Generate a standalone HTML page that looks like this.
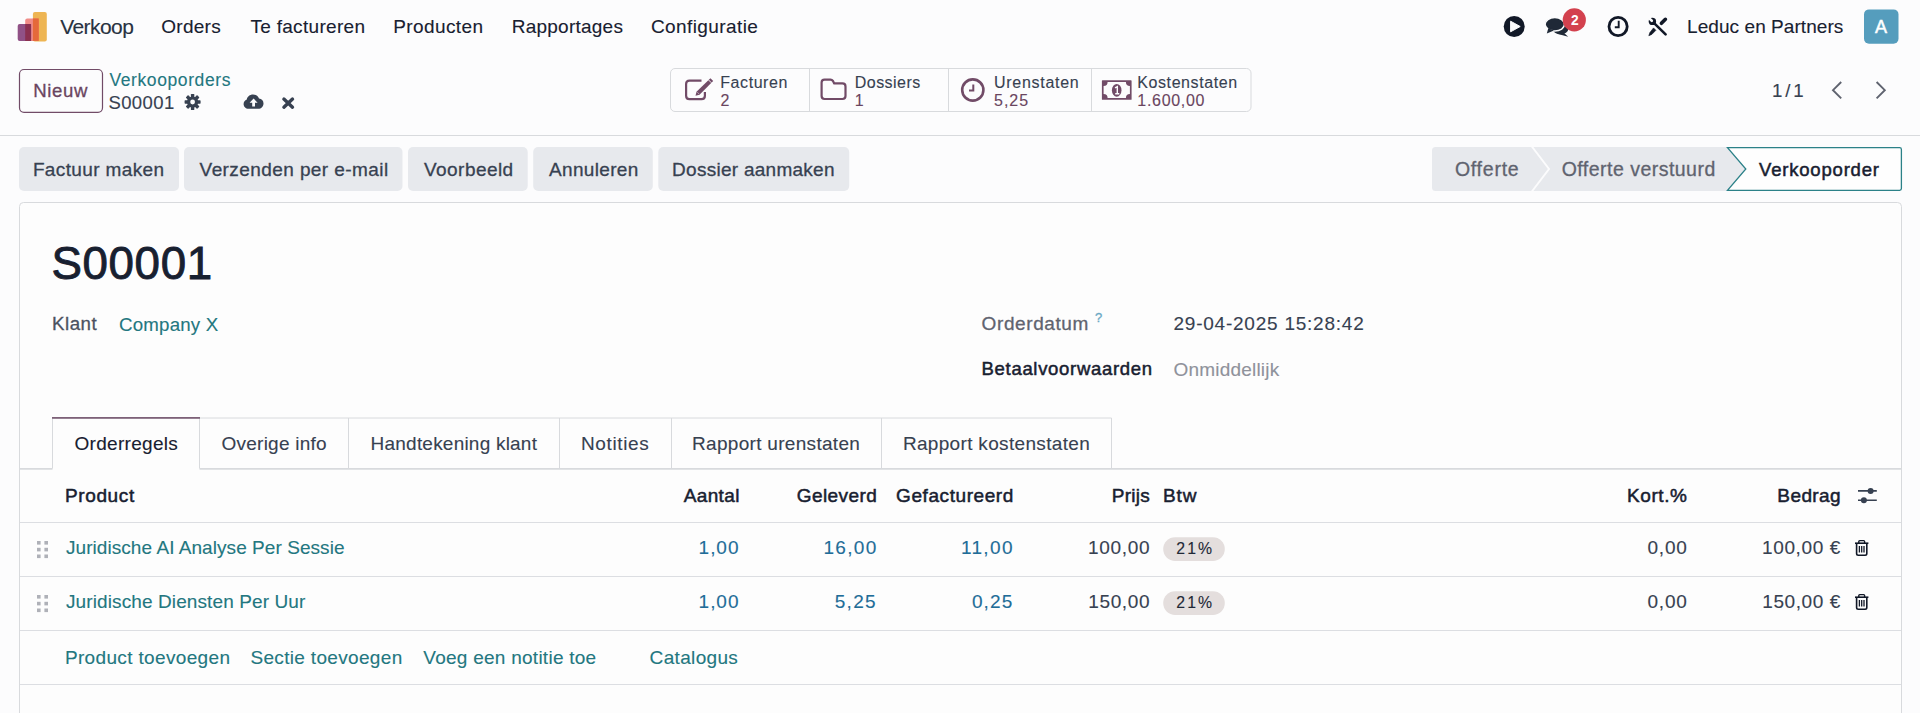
<!DOCTYPE html>
<html><head><meta charset="utf-8"><title>S00001</title>
<style>
html,body{margin:0;padding:0;}
body{width:1920px;height:713px;overflow:hidden;position:relative;background:#fcfcfd;font-family:"Liberation Sans",sans-serif;}
.t{position:absolute;white-space:pre;}
svg.ov{position:absolute;left:0;top:0;}
</style></head><body>
<svg class="ov" width="1920" height="713" viewBox="0 0 1920 713">
<!-- logo -->
<rect x="32.9" y="12" width="13.9" height="29.4" rx="2" fill="#eeb553"/>
<rect x="25.2" y="18.4" width="13.6" height="22.5" rx="2" fill="#f08c88"/>
<rect x="32.9" y="18.4" width="5.9" height="22.5" fill="#e5693a"/>
<rect x="17.7" y="24" width="13.4" height="17.1" rx="2" fill="#905186"/>
<rect x="25.2" y="24" width="5.9" height="17" fill="#8b3050"/>
<!-- navbar icons -->
<circle cx="1514.2" cy="26.5" r="10.5" fill="#111827"/>
<path d="M1510.6 21.2 L1520.2 26.5 L1510.6 31.8 Z" fill="#fcfcfd" stroke="#fcfcfd" stroke-width="1" stroke-linejoin="round"/>
<!-- comments -->
<g fill="#1f2937">
<ellipse cx="1560.5" cy="29" rx="7.8" ry="5.3"/>
<path d="M1563 32 L1568.2 36.8 L1558 34 Z"/>
</g>
<g fill="#1f2937" stroke="#fcfcfd" stroke-width="1.5">
<ellipse cx="1554.8" cy="24.3" rx="9.7" ry="6.7"/>
</g>
<path d="M1548.3 28.2 L1546.8 33.6 L1554 30.4 Z" fill="#1f2937"/>
<circle cx="1574.3" cy="19.9" r="11.6" fill="#d3414e"/>
<!-- clock nav -->
<circle cx="1618.1" cy="26.5" r="9.1" fill="none" stroke="#111827" stroke-width="2.8"/>
<path d="M1618.7 20.8 V27.2 H1614.8" fill="none" stroke="#111827" stroke-width="1.9"/>
<!-- tools -->
<g fill="none" stroke="#111827" stroke-linecap="round">
<path d="M1654.6 23.6 L1665.6 34.4" stroke-width="2.6"/>
<path d="M1665.4 19.3 L1661.4 23.3" stroke-width="3.6"/>
</g>
<circle cx="1652.4" cy="21.4" r="3.7" fill="#111827"/>
<path d="M1648.5 17.6 L1651.8 20.8" stroke="#fcfcfd" stroke-width="2.6" stroke-linecap="round"/>
<path d="M1655.9 30.3 L1653.5 27.9 L1649.9 32.6 L1648.8 35.7 L1651.8 34.4 Z" fill="#111827" stroke="#111827" stroke-width="0.6" stroke-linejoin="round"/>
<!-- avatar -->
<rect x="1864" y="9.4" width="34.5" height="34.4" rx="5" fill="#559dbd"/>
<!-- control panel -->
<rect x="19.5" y="69.5" width="83" height="42.8" rx="4.5" fill="none" stroke="#714b67" stroke-width="1.2"/>
<!-- gear -->
<g transform="translate(192.6 102)">
<g fill="#374151">
<circle r="5.6"/>
<rect x="-1.7" y="-8" width="3.4" height="16" rx="0.6"/>
<rect x="-1.7" y="-8" width="3.4" height="16" rx="0.6" transform="rotate(45)"/>
<rect x="-1.7" y="-8" width="3.4" height="16" rx="0.6" transform="rotate(90)"/>
<rect x="-1.7" y="-8" width="3.4" height="16" rx="0.6" transform="rotate(135)"/>
</g>
<circle r="2.4" fill="#fcfcfd"/>
</g>
<!-- cloud upload -->
<path d="M1 0" fill="none"/>
<g transform="translate(243.6 94.4)">
<path d="M5 14.4 C2 14.4 0 12.2 0 9.6 C0 7.5 1.3 5.8 3.2 5.2 C3.6 2.2 6.2 0 9.4 0 C12.2 0 14.5 1.7 15.4 4.1 C18 4.3 19.9 6.4 19.9 9.1 C19.9 12 17.6 14.4 14.7 14.4 Z" fill="#374151"/>
<path d="M10 4.2 L14 8.4 H11.4 V12 H8.6 V8.4 H6 Z" fill="#fcfcfd"/>
</g>
<!-- times -->
<path d="M283.9 99.1 L292.5 107.2 M292.5 99.1 L283.9 107.2" stroke="#374151" stroke-width="3.4" stroke-linecap="round"/>
<!-- stat box -->
<rect x="670.5" y="68.5" width="580.5" height="43" rx="4.5" fill="none" stroke="#d8dadd" stroke-width="1"/>
<path d="M809.5 69 V111 M948.5 69 V111 M1091.5 69 V111" stroke="#d8dadd" stroke-width="1"/>
<!-- edit icon -->
<g fill="none" stroke="#714b67" stroke-width="2.2">
<path d="M701.5 80.6 H689.5 Q686.1 80.6 686.1 84 V95.8 Q686.1 99.2 689.5 99.2 H701.5 Q704.9 99.2 704.9 95.8 V92"/>
</g>
<path d="M710.4 78.2 L713.2 81 L699.5 94.7 L695.5 95.7 L696.5 91.7 Z" fill="#714b67"/>
<path d="M697.7 92.6 L698.6 93.5" stroke="#fcfcfd" stroke-width="1"/>
<path d="M708.6 80 L711.4 82.8" stroke="#fcfcfd" stroke-width="0.9"/>
<!-- folder -->
<path d="M824.5 79.6 H830.5 Q832 79.6 833 81 L834.2 83.4 H842.5 Q845.5 83.4 845.5 86.4 V96.1 Q845.5 99 842.5 99 H824.5 Q821.6 99 821.6 96.1 V82.6 Q821.6 79.6 824.5 79.6 Z" fill="none" stroke="#714b67" stroke-width="2.2" stroke-linejoin="round"/>
<!-- clock stat -->
<circle cx="972.8" cy="90" r="10.6" fill="none" stroke="#714b67" stroke-width="2.6"/>
<path d="M973.3 84.4 V90.5 H969" fill="none" stroke="#714b67" stroke-width="2"/>
<!-- money -->
<rect x="1101.9" y="80.3" width="29.7" height="19.5" rx="0.6" fill="#714b67"/>
<path d="M1107.6 82 H1125.9 A4 4 0 0 0 1129.9 86 V94.1 A4 4 0 0 0 1125.9 98.1 H1107.6 A4 4 0 0 0 1103.6 94.1 V86 A4 4 0 0 0 1107.6 82 Z" fill="#fcfcfd"/>
<ellipse cx="1116.7" cy="90.3" rx="4.8" ry="6.4" fill="#714b67"/>
<path d="M1115 87.9 L1117.3 86.7 V93.6 M1115.2 93.8 H1119.3" fill="none" stroke="#fcfcfd" stroke-width="1.4"/>
<!-- pager chevrons -->
<path d="M1841.2 82 L1833 90.2 L1841.2 98.4" fill="none" stroke="#5f636f" stroke-width="1.9"/>
<path d="M1876.6 82 L1884.8 90.2 L1876.6 98.4" fill="none" stroke="#5f636f" stroke-width="1.9"/>
<!-- control panel bottom border -->
<rect x="0" y="135" width="1920" height="1" fill="#d8dadd"/>
<!-- action buttons -->
<g fill="#e7e9ed">
<rect x="19" y="147" width="160" height="44" rx="5"/>
<rect x="184" y="147" width="218.5" height="44" rx="5"/>
<rect x="408" y="147" width="119.7" height="44" rx="5"/>
<rect x="533.2" y="147" width="119.6" height="44" rx="5"/>
<rect x="658.3" y="147" width="190.9" height="44" rx="5"/>
</g>
<!-- statusbar -->
<path d="M1435.5 147 H1728 L1746.5 169 L1728 191 H1435.5 Q1432 191 1432 187.5 V150.5 Q1432 147 1435.5 147 Z" fill="#e7e9ed"/>
<path d="M1531.5 146 L1549 169 L1531.5 192" fill="none" stroke="#fcfcfd" stroke-width="2"/>
<path d="M1727.5 147.6 H1899.6 Q1901.4 147.6 1901.4 149.4 V188.6 Q1901.4 190.4 1899.6 190.4 H1727.5 L1745.8 169 Z" fill="#fefefe" stroke="#2b8188" stroke-width="1.3"/>
<!-- sheet -->
<path d="M19.5 720 V206.5 Q19.5 202.5 23.5 202.5 H1897.5 Q1901.5 202.5 1901.5 206.5 V720" fill="#fdfdfd" stroke="#d8dadd" stroke-width="1"/>
<!-- tabs -->
<path d="M20 468.9 H52.5 M199.5 468.9 H1901" stroke="#d8dadd" stroke-width="1.6"/>
<path d="M52.5 468.5 V418.5 M199.5 468.5 V418.5 M199.5 418 H1111.5 V468.5 M348.5 418 V468 M559.5 418 V468 M671.5 418 V468 M881.5 418 V468" fill="none" stroke="#d8dadd" stroke-width="1"/>
<rect x="52" y="417" width="148" height="1.8" fill="#7d6178"/>
<!-- table lines -->
<g fill="#dcdee2">
<rect x="20" y="522" width="1881" height="1"/>
<rect x="20" y="576" width="1881" height="1"/>
<rect x="20" y="630" width="1881" height="1"/>
<rect x="20" y="684" width="1881" height="1"/>
</g>
<!-- sliders icon -->
<g stroke="#374151" stroke-width="1.6">
<path d="M1858 490.9 H1876.8 M1858 500.2 H1876.8"/>
</g>
<circle cx="1870.6" cy="490.9" r="3" fill="#374151"/>
<circle cx="1863.9" cy="500.2" r="3" fill="#374151"/>
<!-- drag handles -->
<g fill="#afb1b8">
<rect x="37" y="541" width="3.6" height="3.6"/><rect x="44.4" y="541" width="3.6" height="3.6"/>
<rect x="37" y="547.8" width="3.6" height="3.6"/><rect x="44.4" y="547.8" width="3.6" height="3.6"/>
<rect x="37" y="554.5" width="3.6" height="3.6"/><rect x="44.4" y="554.5" width="3.6" height="3.6"/>
<rect x="37" y="595" width="3.6" height="3.6"/><rect x="44.4" y="595" width="3.6" height="3.6"/>
<rect x="37" y="601.8" width="3.6" height="3.6"/><rect x="44.4" y="601.8" width="3.6" height="3.6"/>
<rect x="37" y="608.5" width="3.6" height="3.6"/><rect x="44.4" y="608.5" width="3.6" height="3.6"/>
</g>
<!-- badges -->
<rect x="1163.2" y="537.2" width="61.6" height="23.7" rx="11.85" fill="#e4dedd"/>
<rect x="1163.2" y="591.2" width="61.6" height="23.7" rx="11.85" fill="#e4dedd"/>
<!-- trash icons -->
<g id="trash1" fill="none" stroke="#111827">
<path d="M1855 543.2 H1868.4" stroke-width="1.6"/>
<path d="M1858.8 543 V541.5 Q1858.8 540.6 1859.7 540.6 H1863.7 Q1864.6 540.6 1864.6 541.5 V543" stroke-width="1.4"/>
<path d="M1856.6 543.4 V553.5 Q1856.6 555.2 1858.3 555.2 H1865.1 Q1866.8 555.2 1866.8 553.5 V543.4" stroke-width="1.6"/>
<path d="M1859.4 546 V552.6 M1861.7 546 V552.6 M1864 546 V552.6" stroke-width="1.3"/>
</g>
<use href="#trash1" transform="translate(0 54)"/>
</svg>

<div class="t" style="left:60.20px;top:16.00px;font-size:21px;line-height:21px;font-weight:400;-webkit-text-stroke:0.12px #283241;color:#283241;letter-spacing:-0.567px">Verkoop</div>
<div class="t" style="left:161.30px;top:17.00px;font-size:19px;line-height:19px;font-weight:400;-webkit-text-stroke:0.12px #182030;color:#182030;letter-spacing:0.260px">Orders</div>
<div class="t" style="left:250.40px;top:17.00px;font-size:19px;line-height:19px;font-weight:400;-webkit-text-stroke:0.12px #182030;color:#182030;letter-spacing:0.308px">Te factureren</div>
<div class="t" style="left:393.20px;top:17.00px;font-size:19px;line-height:19px;font-weight:400;-webkit-text-stroke:0.12px #182030;color:#182030;letter-spacing:0.413px">Producten</div>
<div class="t" style="left:511.70px;top:17.00px;font-size:19px;line-height:19px;font-weight:400;-webkit-text-stroke:0.12px #182030;color:#182030;letter-spacing:0.240px">Rapportages</div>
<div class="t" style="left:650.90px;top:17.00px;font-size:19px;line-height:19px;font-weight:400;-webkit-text-stroke:0.12px #182030;color:#182030;letter-spacing:0.418px">Configuratie</div>
<div class="t" style="left:1875.00px;top:18.00px;font-size:18px;line-height:18px;font-weight:400;-webkit-text-stroke:0.5px #ffffff;color:#ffffff;letter-spacing:0.000px">A</div>
<div class="t" style="left:1571.10px;top:14.00px;font-size:13.8px;line-height:13.8px;font-weight:700;color:#ffffff;letter-spacing:0.000px">2</div>
<div class="t" style="left:1687.10px;top:17.00px;font-size:19px;line-height:19px;font-weight:400;-webkit-text-stroke:0.12px #182030;color:#182030;letter-spacing:0.062px">Leduc en Partners</div>
<div class="t" style="left:33.20px;top:82.00px;font-size:18.6px;line-height:18.6px;font-weight:400;-webkit-text-stroke:0.3px #6a4560;color:#6a4560;letter-spacing:0.625px">Nieuw</div>
<div class="t" style="left:109.40px;top:72.00px;font-size:17.5px;line-height:17.5px;font-weight:400;-webkit-text-stroke:0.12px #237780;color:#237780;letter-spacing:0.600px">Verkooporders</div>
<div class="t" style="left:108.40px;top:94.00px;font-size:18.5px;line-height:18.5px;font-weight:400;-webkit-text-stroke:0.12px #374151;color:#374151;letter-spacing:0.400px">S00001</div>
<div class="t" style="left:720.25px;top:75.00px;font-size:16px;line-height:16px;font-weight:400;-webkit-text-stroke:0.12px #374151;color:#374151;letter-spacing:0.571px">Facturen</div>
<div class="t" style="left:720.50px;top:93.00px;font-size:16px;line-height:16px;font-weight:400;-webkit-text-stroke:0.12px #6a4560;color:#6a4560;letter-spacing:0.000px">2</div>
<div class="t" style="left:854.80px;top:75.00px;font-size:16px;line-height:16px;font-weight:400;-webkit-text-stroke:0.12px #374151;color:#374151;letter-spacing:0.457px">Dossiers</div>
<div class="t" style="left:854.80px;top:93.00px;font-size:16px;line-height:16px;font-weight:400;-webkit-text-stroke:0.12px #6a4560;color:#6a4560;letter-spacing:0.000px">1</div>
<div class="t" style="left:994.00px;top:75.00px;font-size:16px;line-height:16px;font-weight:400;-webkit-text-stroke:0.12px #374151;color:#374151;letter-spacing:0.722px">Urenstaten</div>
<div class="t" style="left:994.00px;top:93.00px;font-size:16px;line-height:16px;font-weight:400;-webkit-text-stroke:0.12px #6a4560;color:#6a4560;letter-spacing:1.000px">5,25</div>
<div class="t" style="left:1137.30px;top:75.00px;font-size:16px;line-height:16px;font-weight:400;-webkit-text-stroke:0.12px #374151;color:#374151;letter-spacing:0.582px">Kostenstaten</div>
<div class="t" style="left:1137.30px;top:93.00px;font-size:16px;line-height:16px;font-weight:400;-webkit-text-stroke:0.12px #6a4560;color:#6a4560;letter-spacing:0.700px">1.600,00</div>
<div class="t" style="left:1771.90px;top:82.00px;font-size:18.7px;line-height:18.7px;font-weight:400;-webkit-text-stroke:0.12px #374151;color:#374151;letter-spacing:-1.150px">1 / 1</div>
<div class="t" style="left:32.90px;top:160.00px;font-size:19px;line-height:19px;font-weight:400;-webkit-text-stroke:0.3px #374151;color:#374151;letter-spacing:0.367px">Factuur maken</div>
<div class="t" style="left:199.60px;top:160.00px;font-size:19px;line-height:19px;font-weight:400;-webkit-text-stroke:0.3px #374151;color:#374151;letter-spacing:0.416px">Verzenden per e-mail</div>
<div class="t" style="left:424.00px;top:160.00px;font-size:19px;line-height:19px;font-weight:400;-webkit-text-stroke:0.3px #374151;color:#374151;letter-spacing:0.450px">Voorbeeld</div>
<div class="t" style="left:549.00px;top:160.00px;font-size:19px;line-height:19px;font-weight:400;-webkit-text-stroke:0.3px #374151;color:#374151;letter-spacing:0.338px">Annuleren</div>
<div class="t" style="left:672.10px;top:160.00px;font-size:19px;line-height:19px;font-weight:400;-webkit-text-stroke:0.3px #374151;color:#374151;letter-spacing:0.267px">Dossier aanmaken</div>
<div class="t" style="left:1454.90px;top:160.00px;font-size:19.5px;line-height:19.5px;font-weight:400;-webkit-text-stroke:0.3px #5f636f;color:#5f636f;letter-spacing:0.750px">Offerte</div>
<div class="t" style="left:1561.70px;top:160.00px;font-size:19.5px;line-height:19.5px;font-weight:400;-webkit-text-stroke:0.3px #5f636f;color:#5f636f;letter-spacing:0.475px">Offerte verstuurd</div>
<div class="t" style="left:1759.00px;top:161.00px;font-size:18.5px;line-height:18.5px;font-weight:400;-webkit-text-stroke:0.5px #182030;color:#182030;letter-spacing:0.809px">Verkooporder</div>
<div class="t" style="left:51.40px;top:241.00px;font-size:45.7px;line-height:45.7px;font-weight:400;-webkit-text-stroke:0.9px #182030;color:#182030;letter-spacing:0.640px">S00001</div>
<div class="t" style="left:52.00px;top:315.00px;font-size:18.7px;line-height:18.7px;font-weight:400;-webkit-text-stroke:0.3px #4b5261;color:#4b5261;letter-spacing:0.525px">Klant</div>
<div class="t" style="left:119.00px;top:316.00px;font-size:18.7px;line-height:18.7px;font-weight:400;-webkit-text-stroke:0.12px #237780;color:#237780;letter-spacing:0.200px">Company X</div>
<div class="t" style="left:981.60px;top:314.00px;font-size:19px;line-height:19px;font-weight:400;-webkit-text-stroke:0.3px #5f636f;color:#5f636f;letter-spacing:0.600px">Orderdatum</div>
<div class="t" style="left:1095.00px;top:311.00px;font-size:13px;line-height:13px;font-weight:400;-webkit-text-stroke:0.3px #6aa8c4;color:#6aa8c4;letter-spacing:0.000px">?</div>
<div class="t" style="left:1173.50px;top:314.00px;font-size:19px;line-height:19px;font-weight:400;-webkit-text-stroke:0.12px #374151;color:#374151;letter-spacing:0.767px">29-04-2025 15:28:42</div>
<div class="t" style="left:981.60px;top:360.00px;font-size:18.5px;line-height:18.5px;font-weight:400;-webkit-text-stroke:0.5px #182030;color:#182030;letter-spacing:0.687px">Betaalvoorwaarden</div>
<div class="t" style="left:1173.50px;top:360.00px;font-size:19px;line-height:19px;font-weight:400;-webkit-text-stroke:0.12px #8f929b;color:#8f929b;letter-spacing:0.200px">Onmiddellijk</div>
<div class="t" style="left:74.50px;top:434.00px;font-size:19px;line-height:19px;font-weight:400;-webkit-text-stroke:0.12px #182030;color:#182030;letter-spacing:0.300px">Orderregels</div>
<div class="t" style="left:221.50px;top:434.00px;font-size:19px;line-height:19px;font-weight:400;-webkit-text-stroke:0.12px #374151;color:#374151;letter-spacing:0.245px">Overige info</div>
<div class="t" style="left:370.60px;top:434.00px;font-size:19px;line-height:19px;font-weight:400;-webkit-text-stroke:0.12px #374151;color:#374151;letter-spacing:0.215px">Handtekening klant</div>
<div class="t" style="left:581.00px;top:434.00px;font-size:19px;line-height:19px;font-weight:400;-webkit-text-stroke:0.12px #374151;color:#374151;letter-spacing:0.629px">Notities</div>
<div class="t" style="left:692.10px;top:434.00px;font-size:19px;line-height:19px;font-weight:400;-webkit-text-stroke:0.12px #374151;color:#374151;letter-spacing:0.300px">Rapport urenstaten</div>
<div class="t" style="left:902.90px;top:434.00px;font-size:19px;line-height:19px;font-weight:400;-webkit-text-stroke:0.12px #374151;color:#374151;letter-spacing:0.326px">Rapport kostenstaten</div>
<div class="t" style="left:65.00px;top:486.00px;font-size:19px;line-height:19px;font-weight:400;-webkit-text-stroke:0.5px #182030;color:#182030;letter-spacing:0.617px">Product</div>
<div class="t" style="left:683.80px;top:486.00px;font-size:19px;line-height:19px;font-weight:400;-webkit-text-stroke:0.5px #182030;color:#182030;letter-spacing:0.340px">Aantal</div>
<div class="t" style="left:796.80px;top:486.00px;font-size:19px;line-height:19px;font-weight:400;-webkit-text-stroke:0.5px #182030;color:#182030;letter-spacing:0.414px">Geleverd</div>
<div class="t" style="left:896.10px;top:486.00px;font-size:19px;line-height:19px;font-weight:400;-webkit-text-stroke:0.5px #182030;color:#182030;letter-spacing:0.573px">Gefactureerd</div>
<div class="t" style="left:1111.70px;top:486.00px;font-size:19px;line-height:19px;font-weight:400;-webkit-text-stroke:0.5px #182030;color:#182030;letter-spacing:0.300px">Prijs</div>
<div class="t" style="left:1163.00px;top:486.00px;font-size:19px;line-height:19px;font-weight:400;-webkit-text-stroke:0.5px #182030;color:#182030;letter-spacing:0.900px">Btw</div>
<div class="t" style="left:1627.00px;top:486.00px;font-size:19px;line-height:19px;font-weight:400;-webkit-text-stroke:0.5px #182030;color:#182030;letter-spacing:0.580px">Kort.%</div>
<div class="t" style="left:1777.30px;top:486.00px;font-size:19px;line-height:19px;font-weight:400;-webkit-text-stroke:0.5px #182030;color:#182030;letter-spacing:0.420px">Bedrag</div>
<div class="t" style="left:66.00px;top:538.00px;font-size:19px;line-height:19px;font-weight:400;-webkit-text-stroke:0.12px #237780;color:#237780;letter-spacing:0.058px">Juridische AI Analyse Per Sessie</div>
<div class="t" style="left:698.60px;top:538.00px;font-size:19px;line-height:19px;font-weight:400;-webkit-text-stroke:0.12px #1f6d98;color:#1f6d98;letter-spacing:0.967px">1,00</div>
<div class="t" style="left:823.50px;top:538.00px;font-size:19px;line-height:19px;font-weight:400;-webkit-text-stroke:0.12px #1f6d98;color:#1f6d98;letter-spacing:1.300px">16,00</div>
<div class="t" style="left:960.90px;top:538.00px;font-size:19px;line-height:19px;font-weight:400;-webkit-text-stroke:0.12px #1f6d98;color:#1f6d98;letter-spacing:1.375px">11,00</div>
<div class="t" style="left:1087.90px;top:538.00px;font-size:19px;line-height:19px;font-weight:400;-webkit-text-stroke:0.12px #374151;color:#374151;letter-spacing:0.720px">100,00</div>
<div class="t" style="left:1176.30px;top:541.00px;font-size:15.8px;line-height:15.8px;font-weight:400;-webkit-text-stroke:0.12px #1f2937;color:#1f2937;letter-spacing:2.050px">21%</div>
<div class="t" style="left:1647.40px;top:538.00px;font-size:19px;line-height:19px;font-weight:400;-webkit-text-stroke:0.12px #374151;color:#374151;letter-spacing:0.833px">0,00</div>
<div class="t" style="left:1762.00px;top:538.00px;font-size:19px;line-height:19px;font-weight:400;-webkit-text-stroke:0.12px #374151;color:#374151;letter-spacing:0.629px">100,00 €</div>
<div class="t" style="left:66.00px;top:592.00px;font-size:19px;line-height:19px;font-weight:400;-webkit-text-stroke:0.12px #237780;color:#237780;letter-spacing:0.108px">Juridische Diensten Per Uur</div>
<div class="t" style="left:698.60px;top:592.00px;font-size:19px;line-height:19px;font-weight:400;-webkit-text-stroke:0.12px #1f6d98;color:#1f6d98;letter-spacing:0.967px">1,00</div>
<div class="t" style="left:834.70px;top:592.00px;font-size:19px;line-height:19px;font-weight:400;-webkit-text-stroke:0.12px #1f6d98;color:#1f6d98;letter-spacing:1.333px">5,25</div>
<div class="t" style="left:971.90px;top:592.00px;font-size:19px;line-height:19px;font-weight:400;-webkit-text-stroke:0.12px #1f6d98;color:#1f6d98;letter-spacing:1.167px">0,25</div>
<div class="t" style="left:1088.20px;top:592.00px;font-size:19px;line-height:19px;font-weight:400;-webkit-text-stroke:0.12px #374151;color:#374151;letter-spacing:0.660px">150,00</div>
<div class="t" style="left:1176.30px;top:595.00px;font-size:15.8px;line-height:15.8px;font-weight:400;-webkit-text-stroke:0.12px #1f2937;color:#1f2937;letter-spacing:2.050px">21%</div>
<div class="t" style="left:1647.40px;top:592.00px;font-size:19px;line-height:19px;font-weight:400;-webkit-text-stroke:0.12px #374151;color:#374151;letter-spacing:0.833px">0,00</div>
<div class="t" style="left:1762.30px;top:592.00px;font-size:19px;line-height:19px;font-weight:400;-webkit-text-stroke:0.12px #374151;color:#374151;letter-spacing:0.586px">150,00 €</div>
<div class="t" style="left:64.90px;top:648.00px;font-size:19px;line-height:19px;font-weight:400;-webkit-text-stroke:0.12px #237780;color:#237780;letter-spacing:0.350px">Product toevoegen</div>
<div class="t" style="left:250.40px;top:648.00px;font-size:19px;line-height:19px;font-weight:400;-webkit-text-stroke:0.12px #237780;color:#237780;letter-spacing:0.333px">Sectie toevoegen</div>
<div class="t" style="left:423.30px;top:648.00px;font-size:19px;line-height:19px;font-weight:400;-webkit-text-stroke:0.12px #237780;color:#237780;letter-spacing:0.258px">Voeg een notitie toe</div>
<div class="t" style="left:649.60px;top:648.00px;font-size:19px;line-height:19px;font-weight:400;-webkit-text-stroke:0.12px #237780;color:#237780;letter-spacing:0.337px">Catalogus</div>
</body></html>
